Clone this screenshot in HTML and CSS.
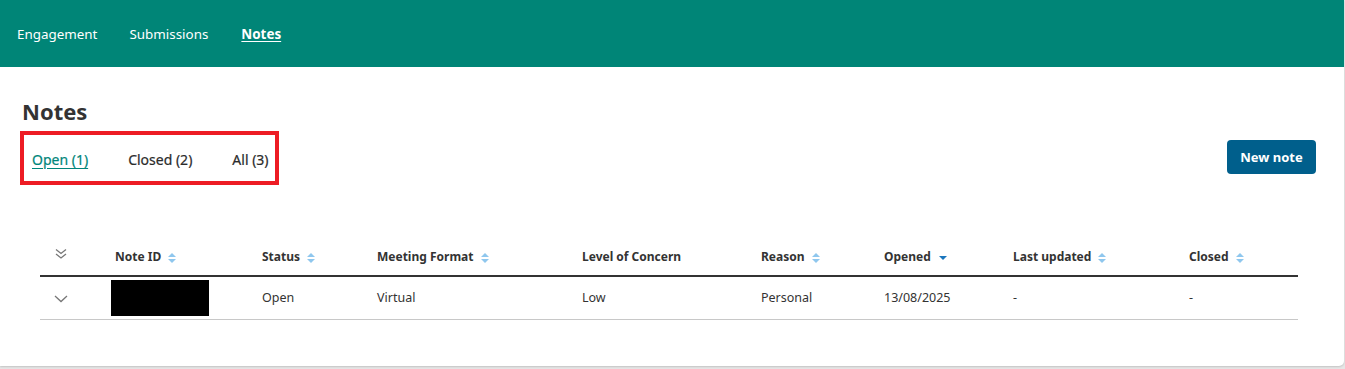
FILE: index.html
```html
<!DOCTYPE html>
<html lang="en">
<head>
<meta charset="utf-8">
<title>Notes</title>
<link rel="stylesheet" href="styles.css">
</head>
<body>
<div class="page">
  <header class="topbar">
    <nav class="nav">
      <a class="nav-link" href="#">Engagement</a>
      <a class="nav-link" href="#">Submissions</a>
      <a class="nav-link active" href="#">Notes</a>
    </nav>
  </header>
  <main class="content">
    <h1 class="title">Notes</h1>
    <div class="toolbar">
      <div class="tabs">
        <a class="tab active" href="#">Open (1)</a>
        <a class="tab" href="#">Closed (2)</a>
        <a class="tab" href="#">All (3)</a>
      </div>
      <button class="btn-primary" type="button">New note</button>
    </div>
    <table class="grid">
      <colgroup>
        <col class="c1"><col class="c2"><col class="c3"><col class="c4"><col class="c5"><col class="c6"><col class="c7"><col class="c8"><col class="c9">
      </colgroup>
      <thead>
        <tr>
          <th class="exp">
            <svg class="chev2" width="14" height="14" viewBox="0 0 14 14"><path d="M2 2.5 L7 6.5 L12 2.5 M2 7 L7 11 L12 7" fill="none" stroke="#777" stroke-width="1.3"/></svg>
          </th>
          <th>Note ID <span class="sort"></span></th>
          <th>Status <span class="sort"></span></th>
          <th>Meeting Format <span class="sort"></span></th>
          <th>Level of Concern</th>
          <th>Reason <span class="sort"></span></th>
          <th>Opened <span class="sort-desc"></span></th>
          <th>Last updated <span class="sort"></span></th>
          <th>Closed <span class="sort"></span></th>
        </tr>
      </thead>
      <tbody>
        <tr>
          <td class="exp">
            <svg class="chev" width="16" height="10" viewBox="0 0 16 10"><path d="M2 2 L8 7.5 L14 2" fill="none" stroke="#777" stroke-width="1.3"/></svg>
          </td>
          <td><span class="redact"></span></td>
          <td>Open</td>
          <td>Virtual</td>
          <td>Low</td>
          <td>Personal</td>
          <td>13/08/2025</td>
          <td>-</td>
          <td>-</td>
        </tr>
      </tbody>
    </table>
  </main>
</div>
</body>
</html>
```
FILE: styles.css
```css
* { box-sizing: border-box; }
html, body { margin: 0; padding: 0; background: #e6e6e6; }
body {
  font-family: "Noto Sans", "Open Sans", sans-serif;
  color: #333;
  width: 1345px;
  height: 369px;
  overflow: hidden;
}
.page {
  width: 1344px;
  height: 366px;
  background: #fff;
  border-radius: 0 0 5px 0;
  box-shadow: 0 1px 2px rgba(0,0,0,0.15);
  overflow: hidden;
}
.topbar {
  height: 67px;
  background: #008577;
  display: flex;
  align-items: center;
  padding-left: 17px;
}
.nav { display: flex; gap: 32px; }
.nav-link {
  color: #fff;
  text-decoration: none;
  font-size: 13.4px;
}
.nav-link.active { font-weight: 700; text-decoration: underline; text-underline-offset: 2px; margin-left: 1px; }
.content { padding: 0 28px 0 22px; }
.title {
  margin: 0;
  padding-top: 30px;
  font-size: 22px;
  line-height: 28px;
  font-weight: 700;
  color: #333;
}
.toolbar {
  display: flex;
  justify-content: space-between;
  align-items: center;
  margin-top: 6px;
}
.tabs {
  display: flex;
  gap: 40px;
  align-items: center;
  border: 4px solid #ed1c24;
  height: 54px;
  width: 259px;
  margin-left: -2px;
  padding-left: 8px;
  padding-top: 2px;
}
.tab {
  font-size: 14px;
  color: #2b2b2b;
  text-decoration: none;
  -webkit-text-stroke: 0.2px #2b2b2b;
}
.tab.active {
  color: #00857a;
  -webkit-text-stroke: 0.2px #00857a;
  text-decoration: underline;
  text-underline-offset: 3px;
}
.btn-primary {
  width: 89px;
  height: 34px;
  border: 0;
  border-radius: 4px;
  background: #005f8c;
  color: #fff;
  font-family: inherit;
  font-size: 13px;
  font-weight: 700;
  margin-top: -2px;
}
.grid {
  margin: 53px 0 0 18px;
  width: 1258px;
  table-layout: fixed;
  border-collapse: collapse;
  font-size: 12.5px;
}
.c1 { width: 71px; } .c2 { width: 147px; } .c3 { width: 115px; } .c4 { width: 205px; }
.c5 { width: 179px; } .c6 { width: 123px; } .c7 { width: 129px; } .c8 { width: 176px; } .c9 { width: 113px; }
.grid th {
  height: 38px;
  text-align: left;
  font-weight: 700;
  font-size: 12px;
  padding: 0 0 0 4px;
  border-bottom: 2px solid #333;
  white-space: nowrap;
  vertical-align: middle;
}
.grid td {
  height: 43px;
  padding: 0 0 0 4px;
  border-bottom: 1px solid #c8c8c8;
  vertical-align: middle;
  color: #333;
}
.grid .exp { padding: 0 0 0 14px; }
.chev2 { display: block; margin-top: -6px; }
.chev { display: block; margin-left: -1px; margin-top: 3px; }
.redact {
  display: block;
  width: 98px;
  height: 36px;
  background: #000;
  margin-left: -4px;
  margin-top: 1px;
}
.sort {
  display: inline-block;
  position: relative;
  width: 0; height: 0;
  border-left: 4px solid transparent;
  border-right: 4px solid transparent;
  border-bottom: 4.5px solid #8fc7ee;
  vertical-align: 4px;
  margin-left: 4px;
}
.sort::after {
  content: "";
  position: absolute;
  left: -4px;
  top: 6px;
  border-left: 4px solid transparent;
  border-right: 4px solid transparent;
  border-top: 4.5px solid #8fc7ee;
}
.sort-desc {
  display: inline-block;
  width: 0; height: 0;
  border-left: 4px solid transparent;
  border-right: 4px solid transparent;
  border-top: 4px solid #1b76bd;
  vertical-align: 1px;
  margin-left: 5px;
}
```
